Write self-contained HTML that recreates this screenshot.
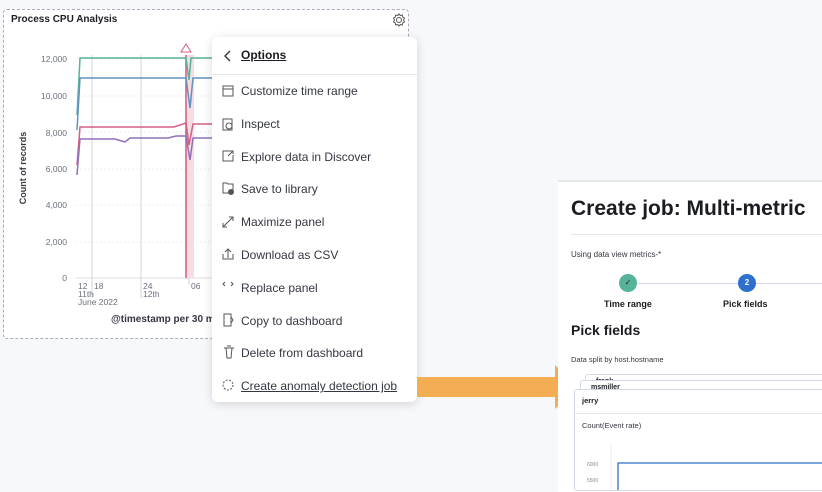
<!DOCTYPE html>
<html><head><style>
body{margin:0;width:822px;height:486px;background:#f7f8fc;font-family:"Liberation Sans",sans-serif;position:relative;overflow:hidden;color:#1a1c21}
.abs{position:absolute}
.panel{left:3px;top:9px;width:404px;height:328px;background:#fff;border:1px dashed #a8adb8;border-radius:4px}
.menu{left:212px;top:37px;width:205px;height:365px;background:#fff;border-radius:6px;box-shadow:0 2px 10px rgba(0,0,0,.15)}
.mi{position:absolute;left:29px;font-size:12px;color:#343741}
.right{left:558px;top:180px;width:270px;height:310px;background:#fff;border-top:2px solid #e4e6eb}
</style></head><body>
<div class="abs panel"></div>
<div class="abs" style="left:11px;top:14px;font-size:10px;font-weight:bold">Process CPU Analysis</div>
<svg class="abs" style="left:391px;top:12px" width="16" height="16" viewBox="0 0 16 16"><circle cx="8" cy="8" r="2.5" fill="none" stroke="#555" stroke-width="1"/><path d="M8 2l1.3 1.5 2-.4.4 2 1.8 1-1 1.9 1 1.9-1.8 1-.4 2-2-.4L8 14l-1.3-1.5-2 .4-.4-2-1.8-1 1-1.9-1-1.9 1.8-1 .4-2 2 .4z" fill="none" stroke="#555" stroke-width="1"/></svg>
<svg class="abs" style="left:0;top:0" width="420" height="340">
<g font-size="8.5" fill="#69707d" text-anchor="end" font-family="Liberation Sans">
<text x="67" y="62">12,000</text><text x="67" y="99">10,000</text><text x="67" y="136">8,000</text><text x="67" y="172">6,000</text><text x="67" y="208">4,000</text><text x="67" y="245">2,000</text><text x="67" y="281">0</text></g>
<g stroke="#eee" stroke-dasharray="2 2"><line x1="76" y1="59" x2="212" y2="59"/><line x1="76" y1="96" x2="212" y2="96"/><line x1="76" y1="132" x2="212" y2="132"/><line x1="76" y1="169" x2="212" y2="169"/><line x1="76" y1="205" x2="212" y2="205"/><line x1="76" y1="242" x2="212" y2="242"/></g>
<line x1="76" y1="278" x2="212" y2="278" stroke="#ddd"/>
<g stroke="#d3d5da"><line x1="92" y1="55" x2="92" y2="298"/><line x1="141" y1="55" x2="141" y2="298"/><line x1="189" y1="55" x2="189" y2="285"/></g>
<rect x="185" y="55" width="9" height="223" fill="#f7dde2"/><line x1="186" y1="55" x2="186" y2="278" stroke="#d36086" stroke-width="1.5"/>
<path d="M186 44l-5 8h10z" fill="none" stroke="#d36086"/>
<path d="M77 115L80 58H186L189 80L191 58H212" fill="none" stroke="#54b399" stroke-width="1.5"/>
<path d="M77 130L80 78H186L190 108L193 78H212" fill="none" stroke="#6092c0" stroke-width="1.5"/>
<path d="M77 165L80 127H174L186 123L189 145L193 124H212" fill="none" stroke="#d36086" stroke-width="1.5"/>
<path d="M77 175L80 139H115L125 142L130 138H168L176 136H186L190 160L193 138H212" fill="none" stroke="#9170b8" stroke-width="1.5"/>
<text x="26" y="168" transform="rotate(-90 26 168)" font-size="9" font-weight="bold" text-anchor="middle" fill="#343741" font-family="Liberation Sans">Count of records</text>
<g font-size="8.5" fill="#69707d" font-family="Liberation Sans"><text x="78" y="289">12</text><text x="94" y="289">18</text><text x="143" y="289">24</text><text x="191" y="289">06</text><text x="78" y="297">11th</text><text x="143" y="297">12th</text><text x="78" y="305">June 2022</text></g>
<text x="111" y="322" font-size="10" font-weight="bold" fill="#343741" font-family="Liberation Sans">@timestamp per 30 m</text>
</svg>
<div class="abs menu">
<svg class="abs" style="left:12px;top:13px" width="8" height="12"><path d="M6 1L1 6l5 5" fill="none" stroke="#343741" stroke-width="1.4"/></svg>
<div class="abs" style="left:29px;top:11px;font-size:12px;font-weight:bold;text-decoration:underline">Options</div>
<div class="abs" style="left:0;top:37px;width:205px;height:1px;background:#e4e6eb"></div>
<div class="mi" style="top:47px">Customize time range</div>
<div class="mi" style="top:80px">Inspect</div>
<div class="mi" style="top:113px">Explore data in Discover</div>
<div class="mi" style="top:145px">Save to library</div>
<div class="mi" style="top:178px">Maximize panel</div>
<div class="mi" style="top:211px">Download as CSV</div>
<div class="mi" style="top:244px">Replace panel</div>
<div class="mi" style="top:277px">Copy to dashboard</div>
<div class="mi" style="top:309px">Delete from dashboard</div>
<div class="mi" style="top:342px;text-decoration:underline">Create anomaly detection job</div>
<svg class="abs" style="left:10px;top:47px" width="14" height="320" fill="none" stroke="#555" stroke-width="1">
<rect x="1" y="2" width="10" height="10"/><line x1="1" y1="5" x2="11" y2="5"/>
<rect x="1" y="35" width="9" height="11"/><circle cx="7" cy="42" r="3"/>
<path d="M9 67H1v10h10v-6M6 72l5-5M8 67h3v3"/>
<path d="M1 99h4l1 1h5v9H1z"/><circle cx="9" cy="108" r="2.5" fill="#555"/>
<path d="M1 143l10-10M1 139v4h4M11 137v-4H7"/>
<path d="M1 170v5h10v-5M6 174v-9M3 168l3-3 3 3"/>
<path d="M3 198l-2 2 2 2M9 198l2 2-2 2"/>
<path d="M2 230h7v12H2zM9 233l2 3-2 3"/>
<path d="M2 264h10M4 264l1 10h4l1-10M5 262h4"/>
<circle cx="6" cy="301" r="5" stroke-dasharray="2 1.5"/>
</svg>
</div>
<svg class="abs" style="left:417px;top:364px" width="162" height="46"><path d="M0 13H138V1L160 23L138 45V33H0z" fill="#f3ad52"/></svg>
<div class="abs right">
<div class="abs" style="left:13px;top:15px;font-size:21px;font-weight:bold">Create job: Multi-metric</div>
<div class="abs" style="left:13px;top:52px;width:260px;height:1px;background:#e4e6eb"></div>
<div class="abs" style="left:13px;top:68px;font-size:8px;color:#343741">Using data view metrics-*</div>
<div class="abs" style="left:79px;top:101px;width:200px;height:1px;background:#d3dae6"></div>
<div class="abs" style="left:61px;top:92px;width:18px;height:18px;border-radius:50%;background:#54b399;color:#222;font-size:8px;text-align:center;line-height:18px">&#10003;</div>
<div class="abs" style="left:180px;top:92px;width:18px;height:18px;border-radius:50%;background:#2f6fce;color:#fff;font-size:8px;font-weight:bold;text-align:center;line-height:18px">2</div>
<div class="abs" style="left:46px;top:117px;font-size:9px;font-weight:bold">Time range</div>
<div class="abs" style="left:165px;top:117px;font-size:9px;font-weight:bold">Pick fields</div>
<div class="abs" style="left:13px;top:140px;font-size:14px;font-weight:bold">Pick fields</div>
<div class="abs" style="left:13px;top:173px;font-size:7.5px;color:#343741">Data split by host.hostname</div>
<div class="abs" style="left:27px;top:192px;width:250px;height:30px;border:1px solid #d3dae6;border-radius:3px;background:#fff;font-size:7px;font-weight:bold;padding:3px 0 0 10px">frank</div>
<div class="abs" style="left:22px;top:198px;width:250px;height:30px;border:1px solid #d3dae6;border-radius:3px;background:#fff;font-size:7px;font-weight:bold;padding:3px 0 0 10px">msmiller</div>
<div class="abs" style="left:16px;top:207px;width:260px;height:100px;border:1px solid #d3dae6;border-radius:3px;background:#fff">
<div class="abs" style="left:7px;top:6px;font-size:7.5px;font-weight:bold">jerry</div>
<div class="abs" style="left:0;top:23px;width:260px;height:1px;background:#e4e6eb"></div>
<div class="abs" style="left:7px;top:31px;font-size:7.5px;color:#343741">Count(Event rate)</div>
<div class="abs" style="left:12px;top:72px;font-size:5px;color:#888">6000</div>
<div class="abs" style="left:12px;top:88px;font-size:5px;color:#888">5500</div>
<svg class="abs" style="left:30px;top:55px" width="230" height="45"><line x1="6" y1="0" x2="6" y2="45" stroke="#eee"/><path d="M13 45V18H230" stroke="#2f6fce" fill="none" stroke-width="1.3"/></svg>
</div>
</div>
</body></html>
